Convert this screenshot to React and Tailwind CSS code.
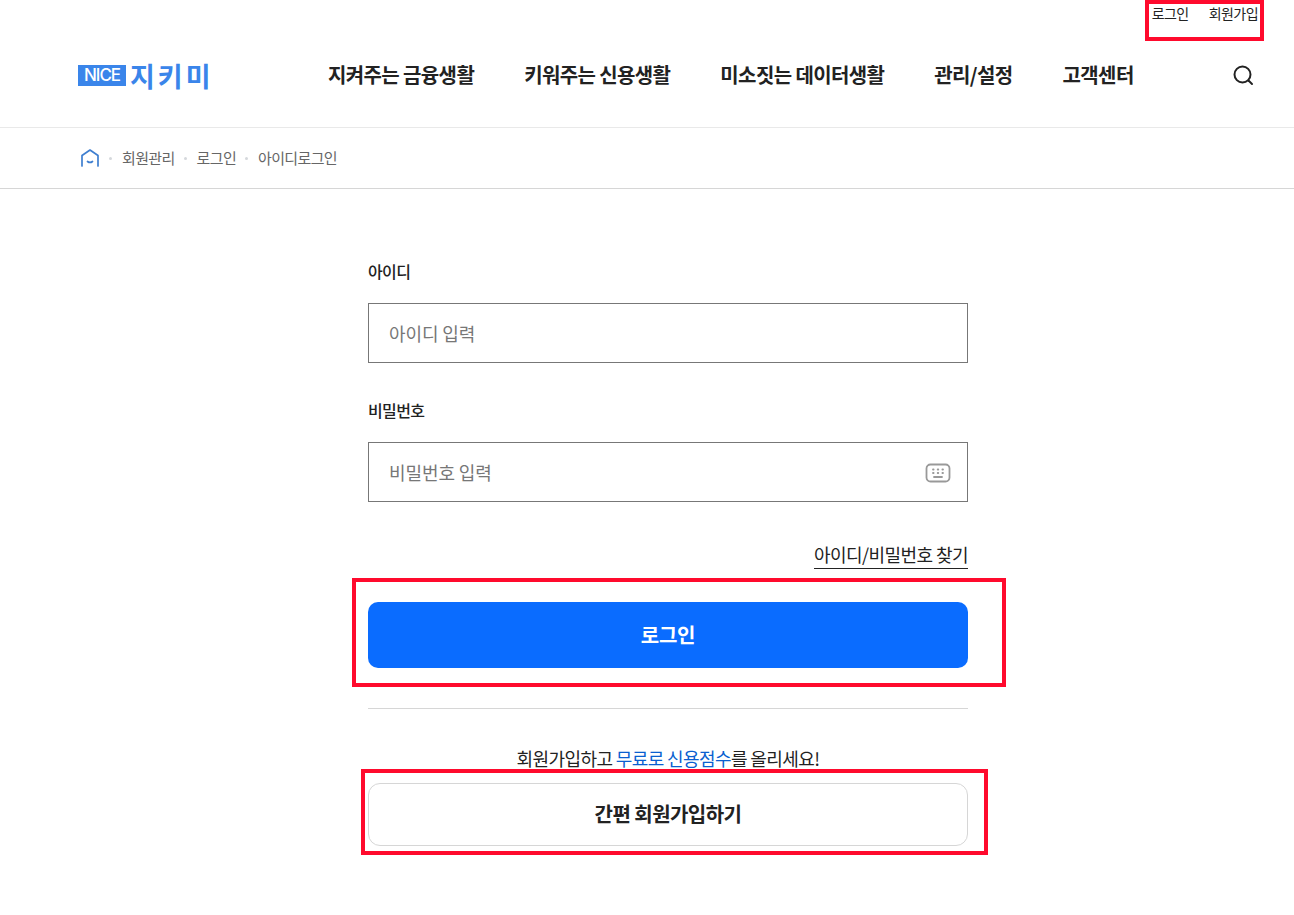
const kr = { fontFamily: '"Noto Sans CJK KR", "Noto Sans", sans-serif' };

const NAV = ["지켜주는 금융생활", "키워주는 신용생활", "미소짓는 데이터생활", "관리/설정", "고객센터"];
const CRUMBS = ["회원관리", "로그인", "아이디로그인"];

function Dot() {
  return <span className="h-[3px] w-[3px] rounded-full bg-[#d5d8dc]" />;
}

function Header() {
  return (
    <header className="relative h-[128px] border-b border-[#e9e9e9]">
      <div className="flex h-[26px] items-center justify-end gap-5 pr-[36px] text-[14px] leading-none tracking-[-0.55px] text-[#222]">
        <a>로그인</a>
        <a>회원가입</a>
      </div>
      <div className="mt-[21px] flex h-[56px] items-center pl-[78px] pr-[40px]">
        <div className="flex w-[250px] items-center gap-[4px]">
          <span className="flex h-[21px] w-[48px] items-center justify-center bg-[#3a85ea] text-[17px] leading-none font-medium tracking-[-1px] text-white" style={{ fontFamily: "Inter, sans-serif" }}>
            NICE
          </span>
          <span className="text-[27px] leading-none font-bold tracking-[3px] text-[#3a85ea]">지키미</span>
        </div>
        <nav className="flex gap-[50px] text-[20px] leading-none font-bold tracking-[-0.62px] text-[#222]">
          {NAV.map((n) => (
            <a key={n}>{n}</a>
          ))}
        </nav>
        <svg className="ml-auto" width="22" height="22" viewBox="0 0 22 22" fill="none" stroke="#222" strokeWidth="2" strokeLinecap="round">
          <circle cx="10.5" cy="10.5" r="8" />
          <path d="M16.5 16.5 20 20" />
        </svg>
      </div>
    </header>
  );
}

function Breadcrumb() {
  return (
    <div className="flex h-[61px] items-center gap-[9px] border-b border-[#d6d6d6] pl-[80px] text-[15px] tracking-[-0.65px] text-[#666]">
      <svg width="20" height="20" viewBox="0 0 20 20" fill="none" stroke="#3f7fd0" strokeWidth="1.7" strokeLinecap="round" strokeLinejoin="round">
        <path d="M2 18V7.5L10 2l8 5.5V18" />
        <path d="M7.5 13.5c1.4 1.1 3.6 1.1 5 0" />
      </svg>
      {CRUMBS.map((c) => (
        <span key={c} className="flex items-center gap-[10px]">
          <Dot />
          <span>{c}</span>
        </span>
      ))}
    </div>
  );
}

function Field({ label, placeholder, children }) {
  return (
    <div>
      <label className="block text-[16px] leading-[22px] font-medium tracking-[-0.6px] text-[#222]">{label}</label>
      <div className="mt-[21px] flex h-[60px] items-center justify-between border border-[#777] pr-[16px] pl-[20px]">
        <span className="text-[18px] tracking-[-0.1px] text-[#777]">{placeholder}</span>
        {children}
      </div>
    </div>
  );
}

function Keyboard() {
  return (
    <svg className="mt-[1px]" width="26" height="20" viewBox="0 0 26 20" fill="none" stroke="#999" strokeWidth="1.8" strokeLinecap="round">
      <rect x="1.5" y="1.5" width="23" height="17" rx="4" />
      <path d="M8 6.5h.6M12.7 6.5h.6M17.4 6.5h.6M8 10h.6M12.7 10h.6M17.4 10h.6M9 14h8" />
    </svg>
  );
}

function RedBox({ className }) {
  return <div className={`pointer-events-none absolute border-[4px] border-[#ff0a2d] ${className}`} />;
}

export default function App() {
  return (
    <div className="relative min-h-[915px] bg-white" style={kr}>
      <Header />
      <Breadcrumb />
      <main className="ml-[368px] w-[600px] pt-[71px]">
        <Field label="아이디" placeholder="아이디 입력" />
        <div className="mt-[36px]">
          <Field label="비밀번호" placeholder="비밀번호 입력">
            <Keyboard />
          </Field>
        </div>
        <div className="mt-[40px] flex justify-end">
          <a className="border-b border-[#222] pb-[1px] text-[18px] leading-[25px] tracking-[-0.55px] text-[#222]">아이디/비밀번호 찾기</a>
        </div>
        <button className="mt-[33px] h-[66px] w-full rounded-[10px] bg-[#0a6cff] text-[20px] font-bold tracking-[-0.3px] text-white">로그인</button>
        <div className="mt-[40px] border-t border-[#d6d6d6]" />
        <p className="mt-[37px] text-center text-[18px] leading-[24px] tracking-[-0.6px] text-[#222]">
          회원가입하고 <span className="text-[#0a5fd0]">무료로 신용점수</span>를 올리세요!
        </p>
        <button className="mt-[13px] h-[63px] w-full rounded-[12px] border border-[#d6d6d6] bg-white pb-[2px] text-[20px] font-bold tracking-[-0.55px] text-[#222]">간편 회원가입하기</button>
      </main>
      <RedBox className="top-0 left-[1145px] h-[41px] w-[119px]" />
      <RedBox className="top-[578px] left-[352px] h-[109px] w-[654px]" />
      <RedBox className="top-[769px] left-[361px] h-[86px] w-[627px]" />
    </div>
  );
}
